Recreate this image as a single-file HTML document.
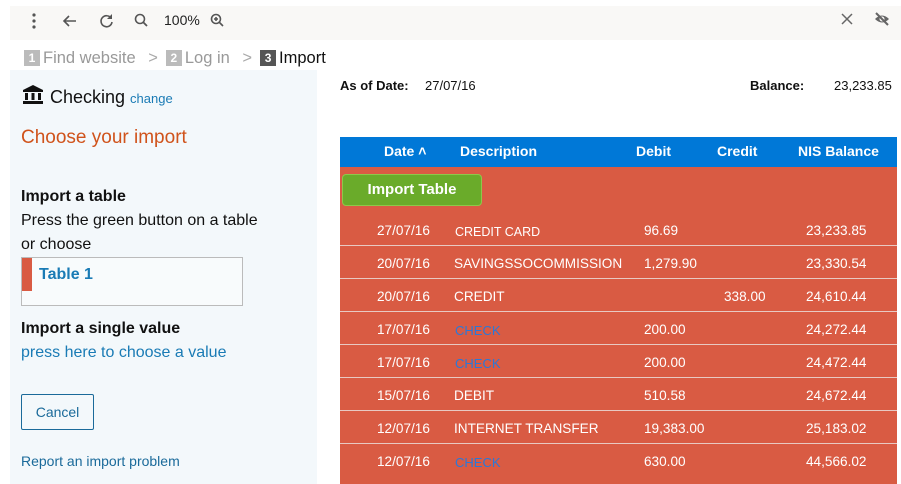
<!DOCTYPE html><html><head><style>
body{margin:0;width:901px;height:484px;overflow:hidden;background:#fff;font-family:"Liberation Sans",Arial,sans-serif;position:relative}
.a{position:absolute;white-space:nowrap}
.tb{position:absolute;left:10px;top:6px;width:891px;height:34px;background:#f9f8f6}
.side{position:absolute;left:10px;top:70px;width:307px;height:414px;background:#f3f8fb}
.num{display:inline-block;width:16px;height:16px;color:#fff;font-size:12px;font-weight:bold;text-align:center;line-height:16px;vertical-align:1px;margin-right:3px}
.th{position:absolute;top:137px;left:340px;width:557px;height:30px;background:#0078d7}
.body{position:absolute;top:167px;left:340px;width:557px;height:317px;background:#d95b43}
.row{position:absolute;left:0;width:557px;height:33px;border-top:1px solid #e8c9c2;color:#fff;font-size:13.6px}
.row span{position:absolute;top:10px}
</style></head><body>
<div class="tb"></div>
<svg class="a" style="left:28px;top:12px" width="220" height="18" viewBox="0 0 220 18">
<g fill="#555"><circle cx="6" cy="3" r="1.6"/><circle cx="6" cy="9" r="1.6"/><circle cx="6" cy="15" r="1.6"/></g>
<path d="M48 9H36M41 4l-5 5 5 5" stroke="#555" stroke-width="1.6" fill="none"/>
<path d="M83 6a5.5 5.5 0 1 0 1 4" stroke="#555" stroke-width="1.6" fill="none"/><path d="M84 2v5h-5" fill="#555"/>
<circle cx="112" cy="7" r="4.5" stroke="#555" stroke-width="1.6" fill="none"/><path d="M115 10l4 4" stroke="#555" stroke-width="1.8"/>
<circle cx="188" cy="7" r="4.5" stroke="#555" stroke-width="1.6" fill="none"/><path d="M191 10l4 4M186 7h4M188 5v4" stroke="#555" stroke-width="1.6"/>
</svg>
<div class="a" style="left:164px;top:12px;font-size:14px;color:#222">100%</div>
<svg class="a" style="left:839px;top:11px" width="55" height="16"><path d="M3 3l10 10M13 3L3 13" stroke="#666" stroke-width="1.5"/>
<path d="M36 8q7-7 14 0q-7 7-14 0z" fill="#666"/><circle cx="43" cy="8" r="2.5" fill="#f9f8f6"/><path d="M37 2l12 12" stroke="#666" stroke-width="2"/></svg>
<div class="a" style="left:24px;top:49px;font-size:16.5px;color:#999"><span class="num" style="background:#bbb">1</span>Find website <span style="margin:0 8px;color:#aaa">&gt;</span><span class="num" style="background:#bbb">2</span>Log in <span style="margin:0 8px;color:#aaa">&gt;</span><span class="num" style="background:#555">3</span><span style="color:#111">Import</span></div>
<div class="side"></div>
<svg class="a" style="left:22px;top:84px" width="22" height="20"><path d="M11 1L1 6v2h20V6z" fill="#111"/><rect x="3" y="9" width="3" height="7" fill="#111"/><rect x="9.5" y="9" width="3" height="7" fill="#111"/><rect x="16" y="9" width="3" height="7" fill="#111"/><rect x="1" y="17" width="20" height="3" fill="#111"/></svg>
<div class="a" style="left:50px;top:87px;font-size:18px;color:#111">Checking <span style="font-size:13px;color:#1a7bb5">change</span></div>
<div class="a" style="left:21px;top:127px;font-size:19px;color:#d0531b">Choose your import</div>
<div class="a" style="left:21px;top:188px;font-size:16px;font-weight:bold;color:#111">Import a table</div>
<div class="a" style="left:21px;top:209px;font-size:16px;color:#111;line-height:24px;white-space:normal;width:280px">Press the green button on a table<br>or choose</div>
<div class="a" style="left:21px;top:257px;width:220px;height:47px;border:1px solid #bbb;background:#f8fbfc"><div style="position:absolute;left:0;top:0;width:10px;height:33px;background:#d95b43"></div><div style="position:absolute;left:17px;top:8px;font-size:16px;font-weight:bold;color:#1a7bb5">Table 1</div></div>
<div class="a" style="left:21px;top:320px;font-size:16px;font-weight:bold;color:#111">Import a single value</div>
<div class="a" style="left:21px;top:344px;font-size:16px;color:#1a7bb5">press here to choose a value</div>
<div class="a" style="left:21px;top:394px;width:71px;height:34px;border:1px solid #1a6a9a;border-radius:2px;font-size:14px;color:#1a6a9a;text-align:center;line-height:34px">Cancel</div>
<div class="a" style="left:21px;top:453px;font-size:14px;color:#1a6a9a">Report an import problem</div>
<div class="a" style="left:340px;top:78px;font-size:13px;font-weight:bold;color:#111">As of Date:</div>
<div class="a" style="left:425px;top:78px;font-size:13px;color:#111">27/07/16</div>
<div class="a" style="left:750px;top:78px;font-size:13px;font-weight:bold;color:#111">Balance:</div>
<div class="a" style="left:834px;top:78px;font-size:13px;color:#111">23,233.85</div>
<div class="th"><div style="color:#fff;font-size:14px;font-weight:bold;position:relative;top:6px">
<span class="a" style="left:44px">Date &#708;</span><span class="a" style="left:120px">Description</span><span class="a" style="left:296px">Debit</span><span class="a" style="left:377px">Credit</span><span class="a" style="left:458px">NIS Balance</span></div></div>
<div class="body">
<div class="a" style="left:2px;top:7px;width:138px;height:30px;background:#6aab2a;border:1px solid #8cc84a;border-radius:4px;color:#fff;font-size:15px;font-weight:bold;text-align:center;line-height:30px">Import Table</div>
<div class="row" style="top:46px;border-top:0"><span style="left:37px">27/07/16</span><span style="left:115px;font-size:12.5px;top:12px">CREDIT CARD</span><span style="left:304px">96.69</span><span style="left:466px">23,233.85</span></div>
<div class="row" style="top:78px"><span style="left:37px">20/07/16</span><span style="left:114px">SAVINGSSOCOMMISSION</span><span style="left:304px">1,279.90</span><span style="left:466px">23,330.54</span></div>
<div class="row" style="top:111px"><span style="left:37px">20/07/16</span><span style="left:114px">CREDIT</span><span style="left:384px">338.00</span><span style="left:466px">24,610.44</span></div>
<div class="row" style="top:144px"><span style="left:37px">17/07/16</span><span style="left:115px;color:#2b78d8;font-size:13px;top:11px">CHECK</span><span style="left:304px">200.00</span><span style="left:466px">24,272.44</span></div>
<div class="row" style="top:177px"><span style="left:37px">17/07/16</span><span style="left:115px;color:#2b78d8;font-size:13px;top:11px">CHECK</span><span style="left:304px">200.00</span><span style="left:466px">24,472.44</span></div>
<div class="row" style="top:210px"><span style="left:37px">15/07/16</span><span style="left:114px">DEBIT</span><span style="left:304px">510.58</span><span style="left:466px">24,672.44</span></div>
<div class="row" style="top:243px"><span style="left:37px">12/07/16</span><span style="left:114px">INTERNET TRANSFER</span><span style="left:304px">19,383.00</span><span style="left:466px">25,183.02</span></div>
<div class="row" style="top:276px"><span style="left:37px">12/07/16</span><span style="left:115px;color:#2b78d8;font-size:13px;top:11px">CHECK</span><span style="left:304px">630.00</span><span style="left:466px">44,566.02</span></div>
</div>
</body></html>
